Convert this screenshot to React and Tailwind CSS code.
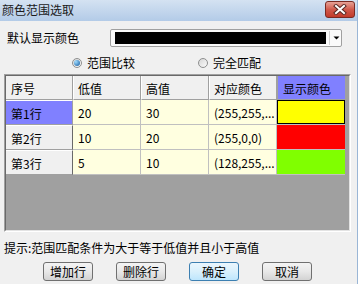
import React from "react";

const rows = [
  { name: "第1行", low: "20", high: "30", rgb: "(255,255,...", color: "bg-[#ffff00]", sel: true },
  { name: "第2行", low: "10", high: "20", rgb: "(255,0,0)", color: "bg-[#ff0000]" },
  { name: "第3行", low: "5", high: "10", rgb: "(128,255,...", color: "bg-[#80ff00]" },
];

function Radio({ checked, label }) {
  return (
    <div className="flex items-center">
      <div className="w-[10px] h-[10px] rounded-full border border-[#8e8f8f] bg-linear-to-br from-[#d6d6d6] to-[#fbfbfb] flex items-center justify-center">
        {checked && (
          <div className="w-[6px] h-[6px] rounded-full bg-radial-[at_30%_30%] from-[#9fdcff] to-[#14589c]" />
        )}
      </div>
      <span className="ml-[5px]">{label}</span>
    </div>
  );
}

function Btn({ children, focus }) {
  return (
    <div
      className={
        focus
          ? "w-[50px] h-[19px] rounded-[3px] border border-[#3c7fb1] bg-linear-to-b from-[#eaf6fd] via-[#d9f0fc] to-[#bee6fd] flex items-center justify-center"
          : "w-[50px] h-[19px] rounded-[3px] border border-[#707070] bg-linear-to-b from-[#f4f4f4] via-[#e8e8e8] to-[#d3d3d3] flex items-center justify-center"
      }
    >
      {children}
    </div>
  );
}

export default function App() {
  return (
    <div className="w-[362px] h-[284px] flex overflow-hidden bg-white text-[12px] leading-[14px] text-[#000] font-['Noto_Sans_CJK_SC',sans-serif]">
      <div className="w-[357px] flex flex-col bg-[#f0f0f0]">
        {/* title bar */}
        <div className="h-[21px] flex items-center justify-between pl-[2px] pr-[2px] bg-linear-to-b from-[#d4e2f2] to-[#b3cbe7] text-[#1a1a1a]">
          <span className="pb-[1px]">颜色范围选取</span>
          <div className="w-[30px] h-[17px] mb-[2px] rounded-[3px] border border-[#7a2a22] bg-linear-to-b from-[#e6a196] via-[#d0594b] to-[#c23a2a] flex items-center justify-center">
            <svg width="14" height="11" viewBox="0 0 14 11">
              <path d="M3 2 L11 9 M11 2 L3 9" stroke="#5a2a25" strokeWidth="4" strokeLinecap="square" />
              <path d="M3 2 L11 9 M11 2 L3 9" stroke="#ffffff" strokeWidth="2" strokeLinecap="square" />
            </svg>
          </div>
        </div>

        {/* default colour */}
        <div className="mt-[8px] h-[18px] flex items-center pl-[7px]">
          <span className="w-[103px]">默认显示颜色</span>
          <div className="w-[232px] h-[18px] rounded-[2px] border border-[#a0a0a0] bg-[#fafafa] flex items-center pl-[4px]">
            <div className="w-[212px] h-[12px] bg-black" />
            <div className="ml-[3px] w-[1px] h-[14px] bg-[#d0d0d0]" />
            <svg width="9" height="6" viewBox="0 0 9 6" className="ml-[2px]">
              <path d="M1.5 1.5 L7.5 1.5 L4.5 4.5 Z" fill="#000" />
            </svg>
          </div>
        </div>

        {/* radios */}
        <div className="mt-[9px] h-[14px] flex items-center pl-[72px]">
          <Radio checked label="范围比较" />
          <div className="ml-[63px]">
            <Radio label="完全匹配" />
          </div>
        </div>

        {/* grid */}
        <div className="mt-[4px] ml-[4px] w-[347px] h-[158px] border border-t-[#a0a0a0] border-l-[#a0a0a0] border-r-white border-b-white">
          <div className="w-full h-full border border-t-[#696969] border-l-[#696969] border-r-[#e3e3e3] border-b-[#e3e3e3] bg-[#a0a0a0] flex flex-col">
            <div className="h-[24px] flex shrink-0">
              <div className="w-[67px] bg-[#f0f0f0] border-r border-b border-r-[#a0a0a0] border-b-[#a0a0a0] pl-[5px] pt-[2px] flex items-center">序号</div>
              {["低值", "高值", "对应颜色"].map((h) => (
                <div key={h} className="w-[68px] bg-[#f0f0f0] border-r border-b border-l border-l-white border-r-[#a0a0a0] border-b-[#a0a0a0] pl-[4px] pt-[2px] flex items-center">
                  {h}
                </div>
              ))}
              <div className="w-[68px] bg-[#8080ff] border-l border-b border-l-[#a0a0a0] border-b-[#a0a0a0] pl-[5px] pt-[2px] flex items-center">显示颜色</div>
            </div>
            {rows.map((r) => (
              <div key={r.name} className="h-[25px] flex shrink-0">
                <div
                  className={
                    r.sel
                      ? "w-[67px] bg-[#8080ff] border-t border-t-white border-r border-r-[#a0a0a0] border-b border-b-[#a0a0a0] pl-[5px] pt-[2px] flex items-center"
                      : "w-[67px] bg-[#f0f0f0] border-t border-t-white border-r border-r-[#696969] border-b border-b-[#a0a0a0] pl-[5px] pt-[2px] flex items-center"
                  }
                >
                  {r.name}
                </div>
                {[r.low, r.high, r.rgb].map((v, i) => (
                  <div key={i} className="w-[68px] bg-[#ffffe0] border-r border-b border-[#c0c0c0] pl-[5px] pt-[2px] flex items-center whitespace-nowrap overflow-hidden">
                    {v}
                  </div>
                ))}
                <div className="w-[68px] border-b border-[#c0c0c0] bg-[#ffffe0]">
                  <div className={r.sel ? "w-full h-full bg-[#ffff00] border border-black" : "w-full h-full " + r.color} />
                </div>
              </div>
            ))}
          </div>
        </div>

        {/* hint */}
        <div className="mt-[9px] pl-[4px] h-[14px] whitespace-nowrap">提示:范围匹配条件为大于等于低值并且小于高值</div>

        {/* buttons */}
        <div className="mt-[7px] flex pl-[43px] gap-[23px]">
          <Btn>增加行</Btn>
          <Btn>删除行</Btn>
          <Btn focus>确定</Btn>
          <Btn>取消</Btn>
        </div>
      </div>
      <div className="w-[5px] border-l border-[#9ab6d6] bg-white" />
    </div>
  );
}
